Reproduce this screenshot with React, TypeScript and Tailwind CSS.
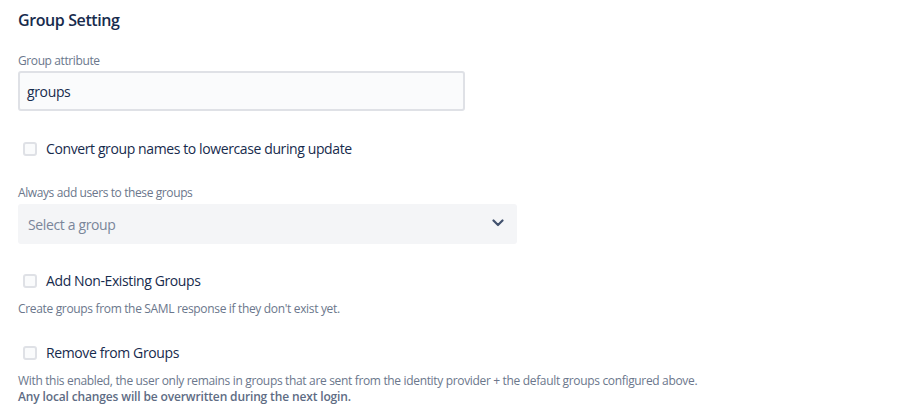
const FONT = "font-['Open_Sans',_'Liberation_Sans',_sans-serif]";

function Checkbox({ label }: { label: string }) {
  return (
    <label className="flex items-center h-6 cursor-pointer">
      <span className="w-[28px] flex pl-[5px]">
        <span className="block w-[14px] h-[14px] rounded-[3px] border-2 border-[#DFE1E6] bg-[#FAFBFC]" />
      </span>
      <span className="text-[14px] leading-5 tracking-[-0.028em] text-[#172B4D]">{label}</span>
    </label>
  );
}

export default function App() {
  return (
    <div className={`${FONT} bg-white w-[903px] h-[409px] px-[18px] pt-[10px]`}>
      <h2 className="text-[16px] leading-5 font-semibold tracking-[-0.025em] text-[#172B4D]">Group Setting</h2>

      {/* Group attribute */}
      <div className="mt-[23px] text-[12px] leading-4 tracking-[-0.033em] text-[#6B778C]">Group attribute</div>
      <div className="mt-[2px] w-[447px] h-[40px] border-2 border-[#DFE1E6] bg-[#FAFBFC] rounded-[3px] flex items-center px-[7px]">
        <span className="text-[14px] tracking-[-0.026em] text-[#172B4D]">groups</span>
      </div>

      <div className="mt-[26px]">
        <Checkbox label="Convert group names to lowercase during update" />
      </div>

      {/* Default groups */}
      <div className="mt-[24px] text-[12px] leading-4 tracking-[-0.033em] text-[#6B778C]">Always add users to these groups</div>
      <div className="mt-[3px] w-[499px] h-[40px] bg-[#F4F5F7] rounded-[3px] flex items-center justify-between pl-[10px] pr-[13px]">
        <span className="text-[14px] tracking-[-0.026em] text-[#7A869A]">Select a group</span>
        <svg width="12" height="8" viewBox="0 0 12 8" fill="none" className="mt-[-2px]">
          <path d="M1.5 1.5 L6 6 L10.5 1.5" stroke="#42526E" strokeWidth="2.2" strokeLinecap="round" strokeLinejoin="round" />
        </svg>
      </div>

      <div className="mt-[25px]">
        <Checkbox label="Add Non-Existing Groups" />
      </div>
      <p className="mt-[8px] text-[12px] leading-4 tracking-[-0.028em] text-[#6B778C]">
        Create groups from the SAML response if they don't exist yet.
      </p>

      <div className="mt-[24px]">
        <Checkbox label="Remove from Groups" />
      </div>
      <p className="mt-[8px] text-[12px] leading-4 tracking-[-0.028em] text-[#6B778C]">
        With this enabled, the user only remains in groups that are sent from the identity provider + the default groups configured above.
        <br />
        <span className="font-semibold tracking-[-0.012em] text-[#5E6C84]">Any local changes will be overwritten during the next login.</span>
      </p>
    </div>
  );
}
